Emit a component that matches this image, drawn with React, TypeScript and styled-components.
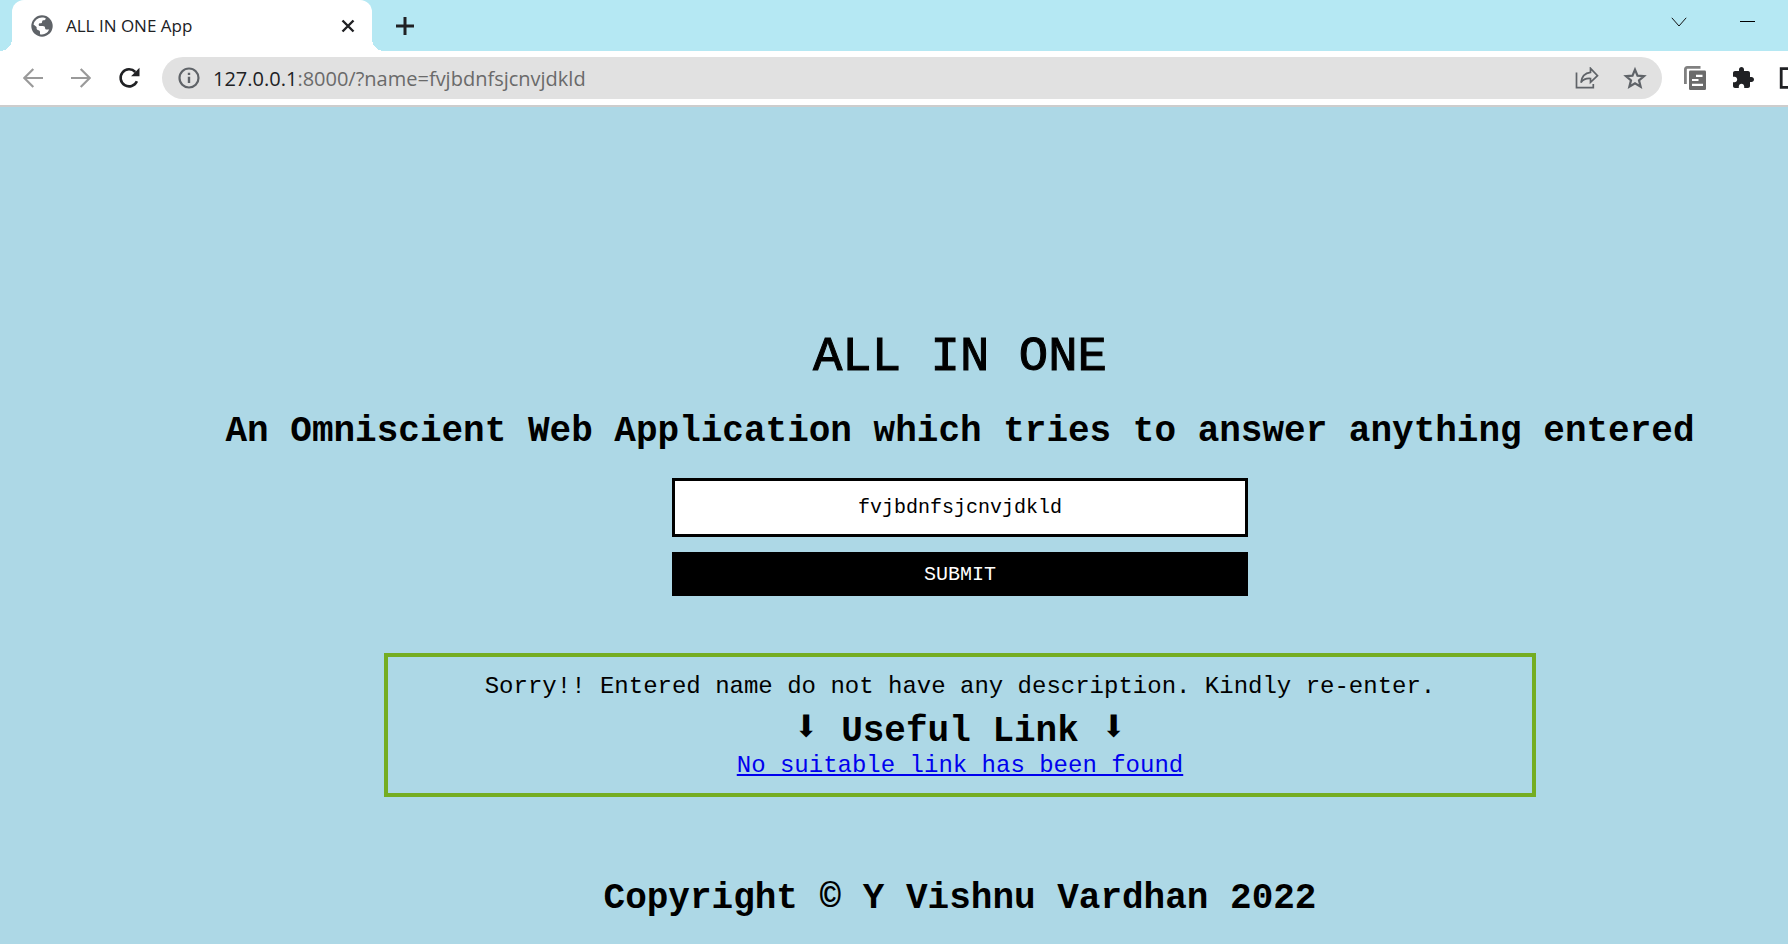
import React, { useState } from "react";
import styled, { createGlobalStyle } from "styled-components";

const GlobalStyle = createGlobalStyle`
  * { box-sizing: border-box; }
  body {
    margin: 0;
    background: #add8e6;
    overflow-x: hidden;
  }
`;

const uiFont = `"Open Sans", "Noto Sans", sans-serif`;
const monoFont = `"Liberation Mono", "Courier New", monospace`;

const TabStrip = styled.div`
  display: flex;
  align-items: stretch;
  height: 51px;
  padding: 0 29px 0 12px;
  background: #b5e8f3;
  font-family: ${uiFont};
`;

const Tab = styled.div`
  position: relative;
  display: flex;
  align-items: center;
  width: 360px;
  padding: 0 16px 0 19px;
  background: #fff;
  border-radius: 12px 12px 0 0;

  &::before,
  &::after {
    content: "";
    position: absolute;
    bottom: 0;
    width: 12px;
    height: 12px;
  }
  &::before {
    right: 100%;
    background: radial-gradient(circle at 0 0, transparent 12px, #fff 12px);
  }
  &::after {
    left: 100%;
    background: radial-gradient(circle at 100% 0, transparent 12px, #fff 12px);
  }
`;

const TabTitle = styled.span`
  flex: 1;
  margin-left: 13px;
  color: #202124;
  font-size: 17px;
  line-height: 24px;
  white-space: nowrap;
`;

const IconButton = styled.button<{ $w?: number; $h?: number }>`
  display: flex;
  flex: none;
  align-items: center;
  justify-content: center;
  width: ${(p) => p.$w ?? 24}px;
  height: ${(p) => p.$h ?? 24}px;
  padding: 0;
  border: 0;
  background: none;
  color: #202124;
`;

const StripActions = styled.div`
  display: flex;
  align-items: center;
  padding-left: 21px;
`;

const WindowActions = styled.div`
  display: flex;
  gap: 44px;
  align-items: flex-start;
  margin-left: auto;
  padding-top: 10px;
`;

const Toolbar = styled.div`
  display: flex;
  align-items: center;
  height: 56px;
  padding-left: 21px;
  overflow: hidden;
  background: #fff;
  border-bottom: 2px solid #cdcdcd;
`;

const Navigation = styled.div`
  display: flex;
  gap: 24px;
  margin-right: 21px;
`;

const AddressBar = styled.div`
  display: flex;
  flex: 1;
  align-items: center;
  height: 42px;
  padding: 0 15px 0 16px;
  border-radius: 21px;
  background: #e1e1e1;
  font-family: ${uiFont};
  font-size: 20px;
  line-height: 28px;
`;

const Host = styled.label`
  margin-left: 13px;
  padding-top: 1px;
  color: #202124;
`;

const Address = styled.input`
  flex: 1;
  min-width: 0;
  padding: 1px 0 0;
  border: 0;
  outline: 0;
  background: none;
  color: #6a6a6a;
  font: inherit;
`;

const AddressActions = styled.div`
  display: flex;
  gap: 24px;
`;

const Extensions = styled.div`
  display: flex;
  gap: 24px;
  margin: 0 -15px 0 21px;
`;

const Page = styled.main`
  display: flex;
  flex-direction: column;
  align-items: center;
  padding: 220px 0 24px 132px;
  color: #000;
  font-family: ${monoFont};
  text-align: center;
`;

const Title = styled.h1`
  margin: 0;
  font-size: 49px;
  font-weight: 400;
  line-height: 60px;
  -webkit-text-stroke: 1px #000;
`;

const Heading = styled.h2`
  margin: 0;
  font-size: 36px;
  font-weight: 700;
  line-height: 40px;
  white-space: nowrap;
`;

const Tagline = styled(Heading)`
  margin-top: 25px;
`;

const SearchForm = styled.form`
  display: flex;
  flex-direction: column;
  gap: 15px;
  width: 576px;
  margin-top: 26px;
`;

const NameField = styled.input`
  height: 59px;
  padding: 0 12px;
  border: 3px solid #000;
  border-radius: 0;
  outline: 0;
  background: #fff;
  color: #000;
  font: 20px/24px ${monoFont};
  text-align: center;
`;

const SubmitButton = styled.button`
  height: 44px;
  padding: 1px 0 0;
  border: 0;
  background: #000;
  color: #fff;
  font: 20px/24px ${monoFont};
`;

const Result = styled.section`
  width: 1152px;
  max-width: 100%;
  margin-top: 57px;
  padding: 16px 0 13px;
  border: 4px solid #75ad22;
  font-size: 24px;
  line-height: 28px;
`;

const Message = styled.p`
  margin: 0 0 10px;
`;

const DownArrow = styled.span`
  font-size: 44px;
  line-height: 36px;
`;

const ResultLink = styled.a`
  display: block;
  color: #0000ee;
`;

const Copyright = styled(Heading)`
  margin-top: 82px;
`;

const GlobeIcon = () => (
  <svg width="22" height="22" viewBox="0 0 22 22" aria-hidden="true">
    <circle cx="11" cy="11" r="10.7" fill="#5f6368" />
    <path d="M11 2.4c2 0 3 .4 3.800 1-.2 1.200-1 1.700-2.200 1.800-1 0-1.500.6-1.500 1.500 0 1.200-.6 1.600-1.800 1.600-1.100 0-1.600.5-1.600 1.400 0 .8.500 1.300 1.400 1.300h2.700c1.500 0 2.300.8 2.300 2 0 1.100.6 1.600 1.800 1.600h2.300A8.600 8.600 0 0 1 11 19.600c-.8 0-1.500-.1-2-.3v-2.200c0-1-.5-1.700-1.500-1.900-1.200-.3-1.900-.9-1.900-2V12L2.500 9.500A8.600 8.600 0 0 1 11 2.400z" fill="#fff" />
  </svg>
);

const CloseIcon = () => (
  <svg width="14" height="14" viewBox="0 0 14 14" aria-hidden="true">
    <path d="M1.500 1.500l11 11M12.500 1.500l-11 11" stroke="currentColor" strokeWidth="2.400" />
  </svg>
);

const PlusIcon = () => (
  <svg width="18" height="18" viewBox="0 0 18 18" aria-hidden="true">
    <path d="M9 0v18M0 9h18" stroke="currentColor" strokeWidth="3" />
  </svg>
);

const ChevronIcon = () => (
  <svg width="16" height="10" viewBox="0 0 16 10" aria-hidden="true">
    <path d="M.8.8L8 9 15.200.8" fill="none" stroke="#111" strokeWidth="1" />
  </svg>
);

const MinimizeIcon = () => (
  <svg width="15" height="2" viewBox="0 0 15 2" aria-hidden="true">
    <path d="M0 .5h15" stroke="#000" />
  </svg>
);

const ArrowIcon = ({ forward }: { forward?: boolean }) => (
  <svg width="20" height="20" viewBox="0 0 20 20" aria-hidden="true">
    <path
      d={forward ? "M0 10h18.500M9.700 1l9 9-9 9" : "M20 10H1.500M10.300 1l-9 9 9 9"}
      fill="none"
      stroke="#9a9a9a"
      strokeWidth="2.200"
    />
  </svg>
);

const ReloadIcon = () => (
  <svg width="22" height="22" viewBox="-1 0 22 22" aria-hidden="true">
    <path d="M17.900 14.200A8.500 8.500 0 1 1 16.300 5" fill="none" stroke="currentColor" strokeWidth="2.600" />
    <path d="M20.500 .8v8.400h-8.400z" fill="currentColor" />
  </svg>
);

const InfoIcon = () => (
  <svg width="22" height="22" viewBox="0 0 22 22" aria-hidden="true">
    <circle cx="11" cy="11" r="9.500" fill="none" stroke="#5f6368" strokeWidth="2.200" />
    <path d="M11 9.700v6.300M11 5.700v2.400" stroke="#5f6368" strokeWidth="2.400" />
  </svg>
);

const ShareIcon = () => (
  <svg width="24" height="22" viewBox="0 0 24 22" fill="none" stroke="#5f6368" strokeWidth="1.700" aria-hidden="true">
    <path d="M1.500 5.500v15.200h16.800V17" />
    <path d="M15.500 1.300l7 7.300-7 6.700v-3.800c-4.500-.3-7.500 1-9.500 4 .6-5.600 3.700-9.500 9.500-10.200z" />
  </svg>
);

const StarIcon = () => (
  <svg width="24" height="24" viewBox="0 0 24 24" aria-hidden="true">
    <path
      d="M12 3.600l2.500 6 6.500.5-5 4.200 1.600 6.400L12 17.200l-5.600 3.500L8 14.300 3 10.100l6.500-.5z"
      fill="none"
      stroke="#5f6368"
      strokeWidth="2.200"
    />
  </svg>
);

const ReaderIcon = () => (
  <svg width="22" height="24" viewBox="0 0 22 24" aria-hidden="true">
    <path d="M1.400 18V3.400q0-2 2-2H16.500" fill="none" stroke="#808080" strokeWidth="2.800" />
    <rect x="5" y="4.500" width="17" height="19.500" rx="1.200" fill="#6b6b6b" />
    <path d="M12 9.800h6.500M8 14h6.500M8 18.800h11" stroke="#fff" strokeWidth="2.200" />
  </svg>
);

const PuzzleIcon = () => (
  <svg width="24" height="24" viewBox="0 0 24 24" aria-hidden="true">
    <path
      d="M20.500 11H19V7c0-1.100-.9-2-2-2h-4V3.500C13 2.120 11.880 1 10.500 1S8 2.120 8 3.500V5H4c-1.100 0-1.990.9-1.990 2v3.800H3.500c1.490 0 2.700 1.210 2.700 2.700s-1.210 2.700-2.700 2.700H2V20c0 1.100.9 2 2 2h3.800v-1.500c0-1.490 1.210-2.700 2.700-2.700s2.700 1.210 2.700 2.700V22H17c1.100 0 2-.9 2-2v-4h1.500c1.380 0 2.500-1.120 2.500-2.500S21.880 11 20.500 11z"
      fill="currentColor"
    />
  </svg>
);

const PanelIcon = () => (
  <svg width="24" height="22" viewBox="0 0 24 22" aria-hidden="true">
    <path d="M2.200 1.600h20v18.800h-20z" fill="none" stroke="currentColor" strokeWidth="2.800" />
  </svg>
);

export default function App() {
  const [name, setName] = useState("fvjbdnfsjcnvjdkld");
  const [path, setPath] = useState(":8000/?name=fvjbdnfsjcnvjdkld");

  return (
    <>
      <GlobalStyle />
      <header>
        <TabStrip>
          <Tab>
            <GlobeIcon />
            <TabTitle>ALL IN ONE App</TabTitle>
            <IconButton $w={16} aria-label="Close tab"><CloseIcon /></IconButton>
          </Tab>
          <StripActions>
            <IconButton aria-label="New tab"><PlusIcon /></IconButton>
          </StripActions>
          <WindowActions>
            <IconButton aria-label="Search tabs"><ChevronIcon /></IconButton>
            <IconButton aria-label="Minimize"><MinimizeIcon /></IconButton>
          </WindowActions>
        </TabStrip>
        <Toolbar>
          <Navigation>
            <IconButton aria-label="Back"><ArrowIcon /></IconButton>
            <IconButton aria-label="Forward"><ArrowIcon forward /></IconButton>
            <IconButton aria-label="Reload"><ReloadIcon /></IconButton>
          </Navigation>
          <AddressBar>
            <InfoIcon />
            <Host htmlFor="address">127.0.0.1</Host>
            <Address id="address" value={path} onChange={(e) => setPath(e.target.value)} />
            <AddressActions>
              <IconButton aria-label="Share"><ShareIcon /></IconButton>
              <IconButton aria-label="Bookmark"><StarIcon /></IconButton>
            </AddressActions>
          </AddressBar>
          <Extensions>
            <IconButton aria-label="Reader"><ReaderIcon /></IconButton>
            <IconButton aria-label="Extensions"><PuzzleIcon /></IconButton>
            <IconButton aria-label="Side panel"><PanelIcon /></IconButton>
          </Extensions>
        </Toolbar>
      </header>
      <Page>
        <Title>ALL IN ONE</Title>
        <Tagline>An Omniscient Web Application which tries to answer anything entered</Tagline>
        <SearchForm onSubmit={(e) => e.preventDefault()}>
          <NameField aria-label="Name" value={name} onChange={(e) => setName(e.target.value)} />
          <SubmitButton type="submit">SUBMIT</SubmitButton>
        </SearchForm>
        <Result>
          <Message>Sorry!! Entered name do not have any description. Kindly re-enter.</Message>
          <Heading><DownArrow>⬇</DownArrow> Useful Link <DownArrow>⬇</DownArrow></Heading>
          <ResultLink href="#">No suitable link has been found</ResultLink>
        </Result>
        <Copyright>Copyright © Y Vishnu Vardhan 2022</Copyright>
      </Page>
    </>
  );
}
